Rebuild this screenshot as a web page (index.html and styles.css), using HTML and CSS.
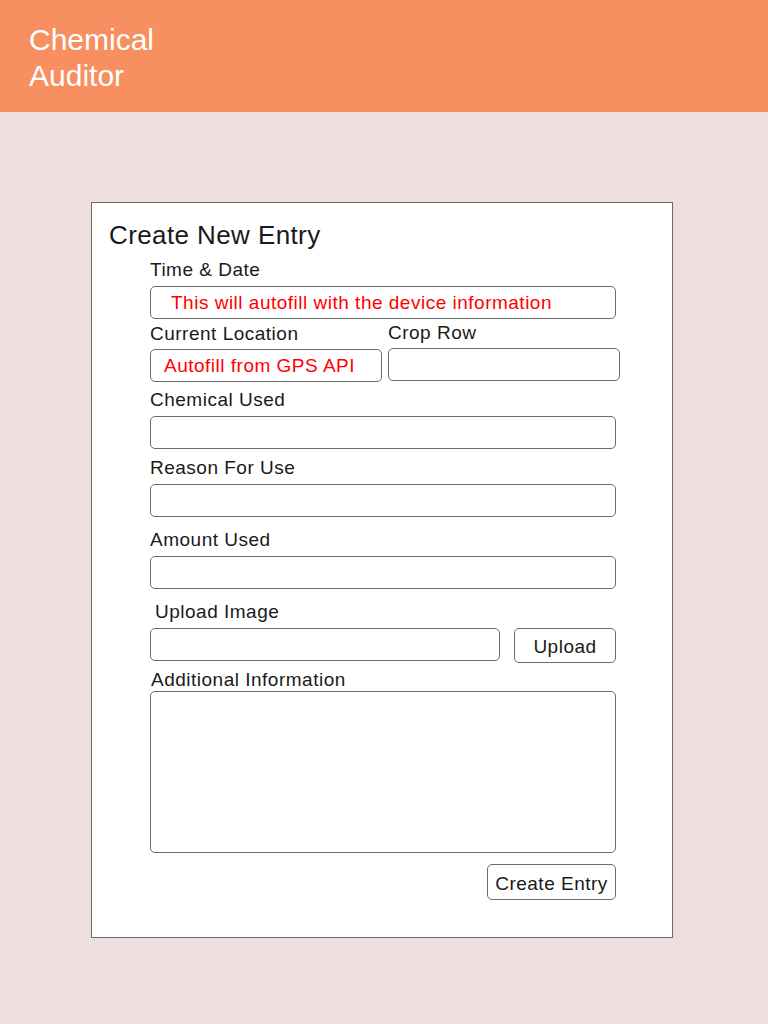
FILE: index.html
```html
<!DOCTYPE html>
<html lang="en">
<head>
<meta charset="utf-8">
<title>Chemical Auditor</title>
<link rel="stylesheet" href="styles.css">
</head>
<body>
<header class="app-header">
  <h1 class="app-title">Chemical<br>Auditor</h1>
</header>
<main class="page">
  <section class="card">
    <h2 class="card-title">Create New Entry</h2>
    <form class="entry-form">
      <div class="field field-first">
        <label class="label">Time &amp; Date</label>
        <div class="input input-filled input-indent-lg">This will autofill with the device information</div>
      </div>
      <div class="field-pair">
        <div class="field field-half">
          <label class="label">Current Location</label>
          <div class="input input-filled">Autofill from GPS API</div>
        </div>
        <div class="field field-half field-raised">
          <label class="label">Crop Row</label>
          <div class="input"></div>
        </div>
      </div>
      <div class="field field-gap-7">
        <label class="label">Chemical Used</label>
        <div class="input"></div>
      </div>
      <div class="field field-gap-8">
        <label class="label">Reason For Use</label>
        <div class="input"></div>
      </div>
      <div class="field field-gap-12">
        <label class="label">Amount Used</label>
        <div class="input"></div>
      </div>
      <div class="field field-gap-12">
        <label class="label label-indent">Upload Image</label>
        <div class="upload-row">
          <div class="input input-file"></div>
          <button type="button" class="btn btn-upload">Upload</button>
        </div>
      </div>
      <div class="field field-gap-6">
        <label class="label label-tight label-indent-sm">Additional Information</label>
        <div class="textarea"></div>
      </div>
      <div class="actions">
        <button type="button" class="btn btn-create">Create Entry</button>
      </div>
    </form>
  </section>
</main>
</body>
</html>
```

FILE: styles.css
```css
* { box-sizing: border-box; }

html, body {
  margin: 0;
  padding: 0;
}

body {
  background: #eedede;
  font-family: "Liberation Sans", Arial, Helvetica, sans-serif;
  color: #1a1a1a;
  width: 768px;
  height: 1024px;
  overflow: hidden;
}

.app-header {
  background: #f78f60;
  height: 112px;
  padding: 22px 0 0 29px;
}

.app-title {
  margin: 0;
  font-weight: normal;
  font-size: 30px;
  line-height: 36px;
  color: #ffffff;
}

.page {
  padding: 90px 0 0 91px;
}

.card {
  width: 582px;
  height: 736px;
  background: #ffffff;
  border: 1px solid #6b6b6b;
  padding: 17px 0 0 17px;
}

.card-title {
  margin: 0;
  font-weight: normal;
  font-size: 26px;
  line-height: 30px;
  letter-spacing: 0.4px;
  color: #1a1a1a;
}

.entry-form {
  margin-left: 41px;
  width: 466px;
  display: flex;
  flex-direction: column;
}

.field {
  display: flex;
  flex-direction: column;
  gap: 5px;
}

.field-first { margin-top: 9px; }
.field-gap-6 { margin-top: 6px; }
.field-gap-7 { margin-top: 7px; }
.field-gap-8 { margin-top: 8px; }
.field-gap-12 { margin-top: 12px; }

.label {
  font-size: 19px;
  line-height: 22px;
  letter-spacing: 0.5px;
  color: #1a1a1a;
}

.label-indent { padding-left: 5px; }
.label-indent-sm { padding-left: 1px; }
.label-tight { margin-bottom: -5px; }

.input {
  height: 33px;
  border: 1px solid #6b6b6b;
  border-radius: 5px;
  background: #ffffff;
  font-size: 19px;
  line-height: 31px;
  letter-spacing: 0.5px;
  padding-left: 13px;
  white-space: nowrap;
}

.input-filled { color: #ff0000; }
.input-indent-lg { padding-left: 20px; }

.field-pair {
  display: flex;
  gap: 6px;
  margin-top: 4px;
  width: 470px;
}

.field-half {
  width: 232px;
  gap: 4px;
}

.field-raised { margin-top: -1px; }

.upload-row {
  display: flex;
  align-items: flex-start;
  gap: 14px;
}

.input-file {
  width: 350px;
}

.btn {
  font-family: "Liberation Sans", Arial, Helvetica, sans-serif;
  font-size: 19px;
  letter-spacing: 0.5px;
  color: #1a1a1a;
  background: #ffffff;
  border: 1px solid #6b6b6b;
  border-radius: 5px;
  padding: 2px 0 0;
  cursor: pointer;
}

.btn-upload {
  width: 102px;
  height: 35px;
}

.textarea {
  height: 162px;
  border: 1px solid #6b6b6b;
  border-radius: 5px;
  background: #ffffff;
}

.actions {
  display: flex;
  justify-content: flex-end;
  margin-top: 11px;
}

.btn-create {
  width: 129px;
  height: 36px;
  padding-top: 4px;
}
```
